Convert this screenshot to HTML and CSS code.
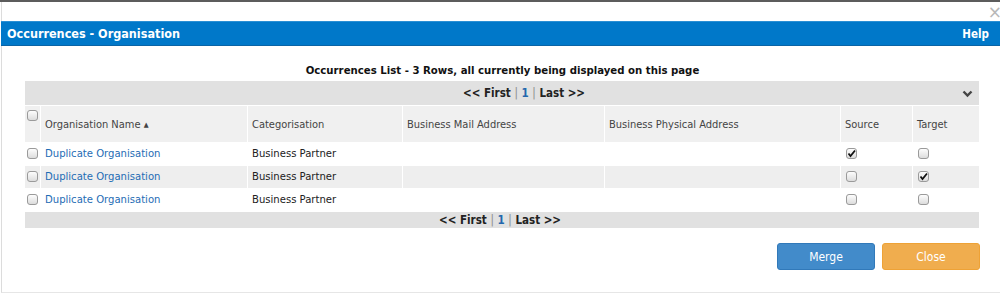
FILE: index.html
```html
<!DOCTYPE html>
<html>
<head>
    <meta name="viewport" content="width=device-width, initial-scale=1.0">
    <title>Occurrences - Organisation</title>
    <link rel="stylesheet" href="styles.css">
</head>
<body>
    <div class="dialog">
        <div class="dialog-top">
            <span class="close-x">&times;</span>
        </div>
        <div class="title-bar">
            <span class="title">Occurrences - Organisation</span>
            <span class="help">Help</span>
        </div>
        <div class="content">
            <div class="caption">Occurrences List - 3 Rows, all currently being displayed on this page</div>
            <table class="grid">
                <colgroup>
                    <col class="w-cb">
                    <col class="w-name">
                    <col class="w-cat">
                    <col class="w-mail">
                    <col class="w-phys">
                    <col class="w-src">
                    <col class="w-tgt">
                </colgroup>
                <tr class="pager">
                    <td colspan="7">
                        <span>&lt;&lt; First</span> <span class="sep">|</span> <span class="page">1</span> <span class="sep">|</span> <span>Last &gt;&gt;</span>
                        <svg class="chevron" width="11" height="8" viewBox="0 0 11 8"><path d="M1.5 1.5 L5.5 5.5 L9.5 1.5" fill="none" stroke="#444" stroke-width="2.4"/></svg>
                    </td>
                </tr>
                <tr class="head">
                    <th class="col-cb"><input type="checkbox"></th>
                    <th>Organisation Name <span class="sort">&#9650;</span></th>
                    <th>Categorisation</th>
                    <th>Business Mail Address</th>
                    <th>Business Physical Address</th>
                    <th>Source</th>
                    <th>Target</th>
                </tr>
                <tr class="row">
                    <td class="col-cb"><input type="checkbox"></td>
                    <td><a href="#">Duplicate Organisation</a></td>
                    <td>Business Partner</td>
                    <td></td>
                    <td></td>
                    <td><input type="checkbox" checked></td>
                    <td><input type="checkbox"></td>
                </tr>
                <tr class="row alt">
                    <td class="col-cb"><input type="checkbox"></td>
                    <td><a href="#">Duplicate Organisation</a></td>
                    <td>Business Partner</td>
                    <td></td>
                    <td></td>
                    <td><input type="checkbox"></td>
                    <td><input type="checkbox" checked></td>
                </tr>
                <tr class="row">
                    <td class="col-cb"><input type="checkbox"></td>
                    <td><a href="#">Duplicate Organisation</a></td>
                    <td>Business Partner</td>
                    <td></td>
                    <td></td>
                    <td><input type="checkbox"></td>
                    <td><input type="checkbox"></td>
                </tr>
                <tr class="pager bottom">
                    <td colspan="7">
                        <span>&lt;&lt; First</span> <span class="sep">|</span> <span class="page">1</span> <span class="sep">|</span> <span>Last &gt;&gt;</span>
                    </td>
                </tr>
            </table>
            <div class="button-container">
                <button class="btn merge">Merge</button>
                <button class="btn close">Close</button>
            </div>
        </div>
    </div>
</body>
</html>
```

FILE: styles.css
```css
body {
    margin: 0;
    font-family: 'DejaVu Sans Condensed', 'DejaVu Sans', sans-serif;
    font-size: 11px;
    color: #333;
    background: #fff;
    border-top: 2px solid #5c5c5c;
}
.dialog {
    position: relative;
    height: 291px;
    border-left: 1px solid #dcdcdc;
    border-bottom: 1px solid #e6e6e6;
    box-sizing: border-box;
    margin-left: 1px;
}
.dialog-top {
    height: 19px;
}
.close-x {
    position: absolute;
    right: -2px;
    top: 1px;
    font-family: 'DejaVu Sans', sans-serif;
    font-size: 17px;
    line-height: 18px;
    color: #b8b8b8;
}
.title-bar {
    display: flex;
    justify-content: space-between;
    align-items: center;
    height: 23px;
    margin-left: -1px;
    padding: 0 11px 0 6px;
    background: #0078c9;
    border-top: 1px solid #2a8fd4;
    border-bottom: 1px solid #0a64a6;
    color: #fff;
    font-weight: bold;
}
.title {
    font-size: 12.5px;
}
.help {
    font-size: 11.5px;
}
.content {
    padding: 18px 19px 0 22px;
}
.caption {
    text-align: center;
    font-weight: bold;
    font-size: 11.3px;
    color: #111;
    height: 16px;
}
.grid {
    width: 955px;
    table-layout: fixed;
    border-collapse: collapse;
}
.w-cb { width: 16px; }
.w-name { width: 207px; }
.w-cat { width: 155px; }
.w-mail { width: 202px; }
.w-phys { width: 236px; }
.w-src { width: 72px; }
.w-tgt { width: 67px; }
.grid td, .grid th {
    border: 1px solid #fff;
    padding: 0 4px;
    text-align: left;
    font-weight: normal;
}
.pager td {
    background: #e1e1e1;
    height: 24px;
    text-align: center;
    position: relative;
    color: #222;
    font-size: 11.5px;
}
.grid .pager td {
    font-weight: bold;
    padding-left: 48px;
}
.pager .sep {
    color: #8a8a8a;
    font-weight: normal;
}
.pager .page {
    color: #2367ad;
}
.pager.bottom td {
    height: 16px;
}
.grid .pager.bottom td {
    padding-left: 0;
}
.chevron {
    position: absolute;
    right: 6px;
    top: 9px;
}
.head th {
    background: #f0f0f0;
    height: 32px;
    color: #444;
}
.grid .col-cb {
    padding: 0 2px 0 2px;
}
.head th.col-cb {
    vertical-align: top;
    padding-top: 4px;
}
.sort {
    font-size: 7px;
    position: relative;
    top: -1px;
}
.grid .row td {
    height: 21px;
    padding-bottom: 1px;
    background: #fff;
    color: #222;
    font-size: 11.2px;
}
.grid .row.alt td {
    background: #eeeeee;
}
.row a {
    color: #1f6db5;
    text-decoration: none;
}
input[type="checkbox"] {
    -webkit-appearance: none;
    appearance: none;
    width: 11px;
    height: 11px;
    margin: 0 0 0 1px;
    display: block;
    border: 1px solid #9a9a9a;
    border-radius: 3px;
    background: linear-gradient(#fdfdfd, #dcdcdc);
}
.grid .col-cb input[type="checkbox"] {
    margin: 0;
}
input[type="checkbox"]:checked {
    background: url("data:image/svg+xml;utf8,<svg xmlns='http://www.w3.org/2000/svg' width='9' height='9' viewBox='0 0 9 9'><path d='M1.5 4.5 L3.5 7 L8 1.5' fill='none' stroke='%23111' stroke-width='1.8'/></svg>") center/9px 9px no-repeat, linear-gradient(#fdfdfd, #dcdcdc);
}
.button-container {
    display: flex;
    justify-content: flex-end;
    gap: 7px;
    margin-top: 14px;
    margin-right: 1px;
}
.btn {
    width: 98px;
    height: 27px;
    border-radius: 3px;
    font-family: 'DejaVu Sans Condensed', 'DejaVu Sans', sans-serif;
    font-size: 12px;
    color: #fff;
    cursor: pointer;
}
.btn.merge {
    background: #428bca;
    border: 1px solid #3179b9;
}
.btn.close {
    background: #f0ad4e;
    border: 1px solid #eea236;
}
```
